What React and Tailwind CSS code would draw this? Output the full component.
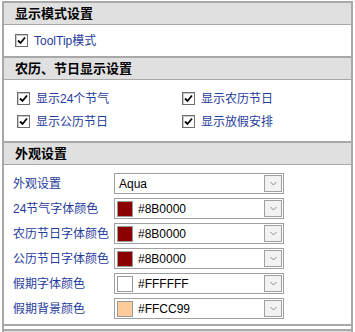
import React from "react";

const font = "font-['Liberation_Sans','Noto_Sans_CJK_SC',sans-serif]";

function Check({ label }) {
  return (
    <label className="flex items-center gap-[6px] text-[12px] text-[#1f3b9b] leading-none">
      <span className="w-[13px] h-[13px] border border-[#6e6e6e] bg-white flex items-center justify-center shadow-[inset_1px_1px_0_#c8c8c8]">
        <svg width="9" height="9" viewBox="0 0 9 9">
          <path d="M1 4.5 L3.5 7 L8 1.5" stroke="#000" strokeWidth="1.8" fill="none" />
        </svg>
      </span>
      {label}
    </label>
  );
}

function Header({ title }) {
  return (
    <div className="h-[24px] bg-[#e0e0e0] border-t-2 border-b border-[#a8a8a8] flex items-center pl-[11px] text-[13px] font-bold text-black">
      {title}
    </div>
  );
}

function Select({ value, swatch }) {
  return (
    <div className="w-[170px] h-[21px] border border-[#a0a0a0] bg-white flex items-center pl-[2px] pr-[1px]">
      {swatch && (
        <span
          className="w-[16px] h-[16px] border border-[#9a9a9a] mr-[5px]"
          style={{ background: swatch }}
        />
      )}
      <span className={`flex-1 text-[12px] text-black ${swatch ? "" : "pl-[2px]"}`}>{value}</span>
      <span className="w-[18px] h-[17px] border border-[#a0a0a0] bg-[#f2f2f2] flex items-center justify-center">
        <svg width="7" height="5" viewBox="0 0 7 5">
          <path d="M0.5 1 L3.5 4 L6.5 1" stroke="#888" strokeWidth="1" fill="none" />
        </svg>
      </span>
    </div>
  );
}

const rows = [
  { label: "外观设置", value: "Aqua" },
  { label: "24节气字体颜色", value: "#8B0000", swatch: "#8B0000" },
  { label: "农历节日字体颜色", value: "#8B0000", swatch: "#8B0000" },
  { label: "公历节日字体颜色", value: "#8B0000", swatch: "#8B0000" },
  { label: "假期字体颜色", value: "#FFFFFF", swatch: "#FFFFFF" },
  { label: "假期背景颜色", value: "#FFCC99", swatch: "#FFCC99" },
];

export default function App() {
  return (
    <div className={`w-[355px] h-[332px] bg-white overflow-hidden pt-[1px] pl-[2px] ${font}`}>
      <div className="w-[351px] border-x-2 border-[#a8a8a8]">
        <Header title="显示模式设置" />
        <div className="h-[31px] flex items-center pl-[11px]">
          <Check label="ToolTip模式" />
        </div>
        <Header title="农历、节日显示设置" />
        <div className="h-[61px] pl-[13px] pt-[12px] grid grid-cols-[165px_1fr] content-start gap-y-[10px]">
          <Check label="显示24个节气" />
          <Check label="显示农历节日" />
          <Check label="显示公历节日" />
          <Check label="显示放假安排" />
        </div>
        <Header title="外观设置" />
        <div className="pt-[8px] pb-[5px] pl-[9px] flex flex-col gap-[4px] border-b-2 border-[#a8a8a8]">
          {rows.map((r) => (
            <div key={r.label} className="flex items-center">
              <span className="w-[101px] text-[12px] text-[#1f3b9b]">{r.label}</span>
              <Select value={r.value} swatch={r.swatch} />
            </div>
          ))}
        </div>
        <div className="h-[3px]" />
        <div className="h-[10px] bg-[#e0e0e0] border-t-2 border-[#a8a8a8]" />
      </div>
    </div>
  );
}
